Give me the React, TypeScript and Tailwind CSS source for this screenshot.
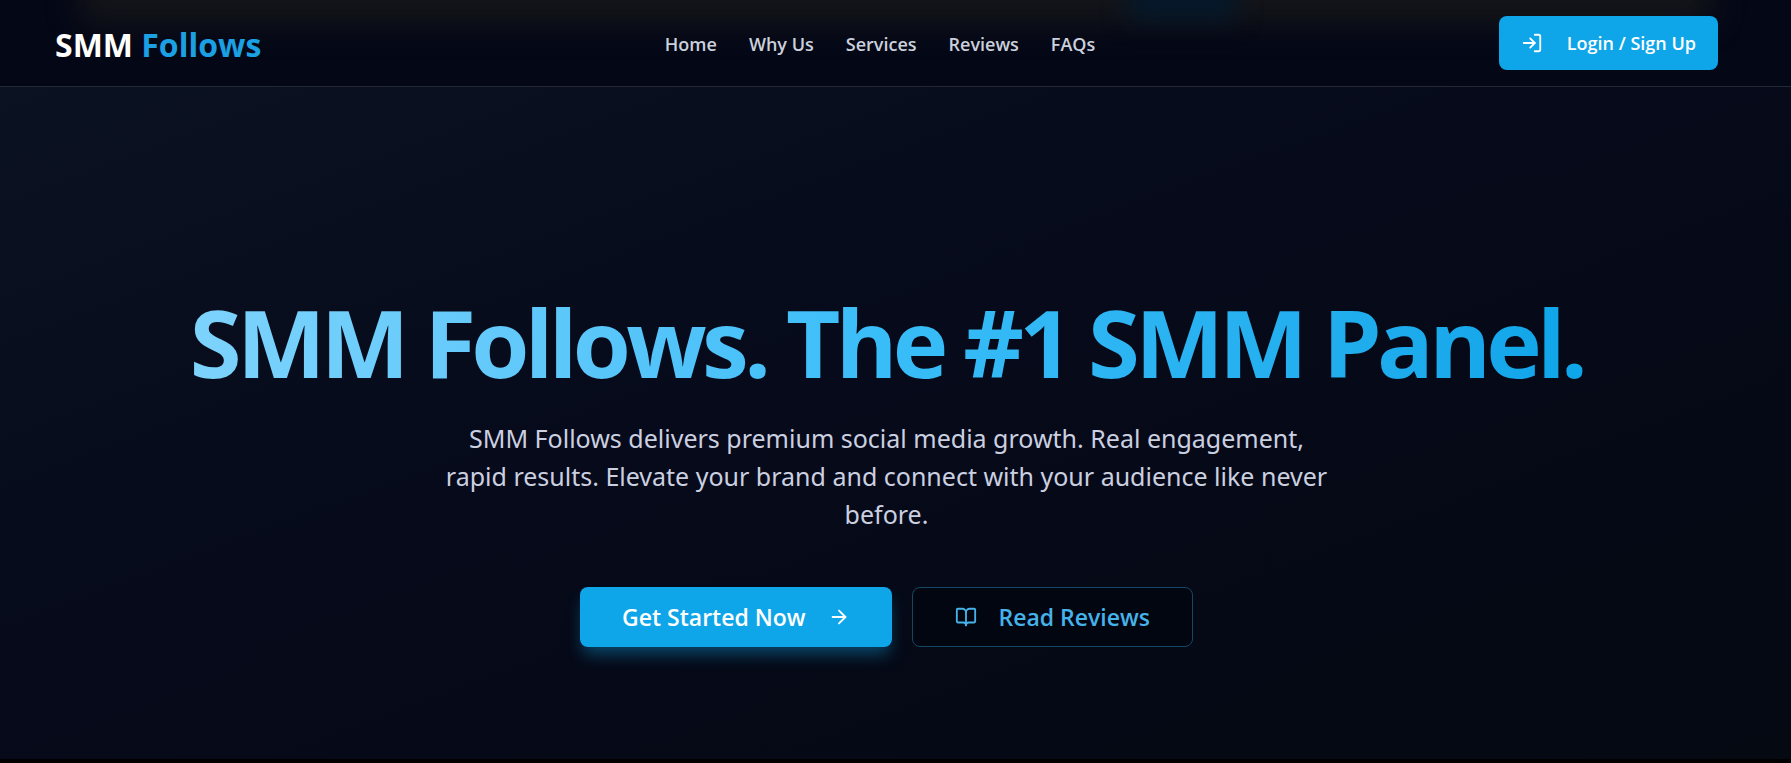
import { ArrowRight, BookOpen, LogIn } from "lucide-react";

const links = ["Home", "Why Us", "Services", "Reviews", "FAQs"];

export default function App() {
  return (
    <div className="flex min-h-screen flex-col bg-black pb-1 font-['Open_Sans','Noto_Sans',sans-serif]">
      <header className="relative overflow-hidden border-b border-[#232838] bg-[#040716]">
        <div className="absolute inset-x-20 -top-8 h-14 bg-[#1a1a1a] opacity-75 blur-lg" />
        <div className="absolute -top-7 left-[63%] h-12 w-[6%] bg-[#04182a] blur-md" />
        <div className="relative flex h-[86px] items-center justify-between pr-[73px] pl-[55px]">
          <a href="#" className="pt-1 text-[32px] leading-10 font-bold text-white">
            SMM <span className="text-[#1aa0e3]">Follows</span>
          </a>
          <nav className="flex gap-8 pt-0.5 text-lg font-semibold text-[#cbd0dc]">
            {links.map((l) => (
              <a key={l} href="#">
                {l}
              </a>
            ))}
          </nav>
          <button className="flex h-[54px] items-center gap-6 rounded-lg bg-[#0fa5e9] px-[22px] text-lg font-semibold text-white">
            <LogIn size={22} />
            Login / Sign Up
          </button>
        </div>
      </header>
      <main className="flex flex-1 flex-col items-center bg-linear-to-br from-[#0b1222] via-[#060a1a] via-45% to-[#050912] px-4 pt-[202px] pr-[34px] text-center">
        <h1 className="bg-linear-to-r from-[#7dd3fc] via-[#38bdf8] to-[#0ea5e9] bg-clip-text text-[94px] leading-[106px] font-bold tracking-tighter text-transparent">
          SMM Follows. The #1 SMM Panel.
        </h1>
        <p className="mt-6 max-w-[896px] font-['Noto_Sans','Open_Sans',sans-serif] text-[25px] leading-[38px] text-[#cbd0e0]">
          SMM Follows delivers premium social media growth. Real engagement, rapid results. Elevate your brand and connect with your audience like never before.
        </p>
        <div className="mt-[54px] flex gap-5 text-[23px] font-semibold">
          <button className="flex h-[60px] items-center gap-[22px] rounded-lg bg-[#0fa5e9] px-[42px] text-white shadow-[0_10px_16px_-3px_rgba(14,165,233,0.4)]">
            Get Started Now
            <ArrowRight size={22} />
          </button>
          <button className="flex h-[60px] items-center gap-[22px] rounded-lg border border-[#144766] bg-[#020611] px-[42px] text-[#46b2ea]">
            <BookOpen size={22} />
            Read Reviews
          </button>
        </div>
      </main>
    </div>
  );
}
